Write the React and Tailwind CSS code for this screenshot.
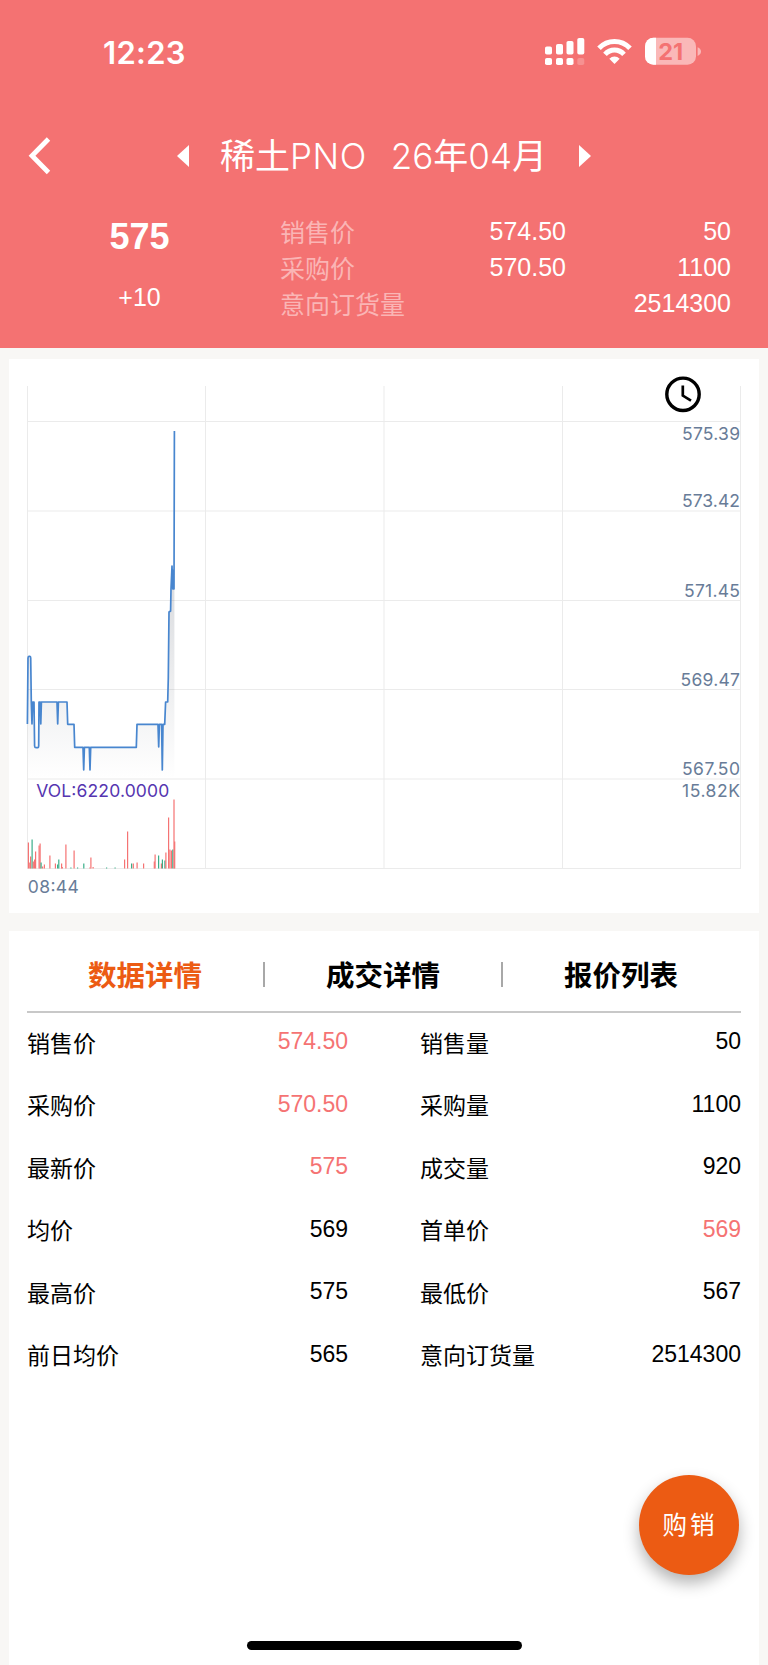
import { useState } from "react";

const quotes = [
  { label: "销售价", price: "574.50", amount: "50" },
  { label: "采购价", price: "570.50", amount: "1100" },
  { label: "意向订货量", price: "", amount: "2514300" },
];

const tabs = ["数据详情", "成交详情", "报价列表"];

const details = [
  { label: "销售价", value: "574.50", up: true },
  { label: "销售量", value: "50" },
  { label: "采购价", value: "570.50", up: true },
  { label: "采购量", value: "1100" },
  { label: "最新价", value: "575", up: true },
  { label: "成交量", value: "920" },
  { label: "均价", value: "569" },
  { label: "首单价", value: "569", up: true },
  { label: "最高价", value: "575" },
  { label: "最低价", value: "567" },
  { label: "前日均价", value: "565" },
  { label: "意向订货量", value: "2514300" },
];

// chart coordinates are relative to the top left corner of the card
const gridX = [18.5, 196.5, 375, 553.5, 731.5];
const gridY = [62.5, 152, 241.5, 330.5, 420, 509.5];

const axisLabels = [
  { text: "575.39", y: 80.5, width: 58 },
  { text: "573.42", y: 148, width: 58 },
  { text: "571.45", y: 238, width: 56 },
  { text: "569.47", y: 327.3, width: 59.5 },
  { text: "567.50", y: 416.3, width: 58 },
  { text: "15.82K", y: 438, width: 58 },
];

const linePath =
  "M18.4 365L19 299Q19.2 297.3 20 297.3H21Q21.7 297.3 21.7 299L22.3 343L23 365L23.7 343H25L25.6 387Q25.7 388.7 27 388.7H28.8Q29.6 388.7 29.7 387L30 343H31.3L31.8 365L32.4 343H48L48.7 365L49.4 343H58L58.7 365.3H65L65.7 388.4H74L74.7 411L75.4 388.4H80.3L81 411L81.7 388.4H127.3L128 365.4H149L149.7 388L150.4 365.4H152.6L153.3 411L154 365.4H155.7L156.6 343H158.7L159.3 319L160 253L161.6 252L162 230L163 207L163.8 230L164.3 211L165 230L165.4 72";

// x, height, colour of every volume bar
const bars = [
  [19.3, 26, "r"], [20.7, 6, "r"], [21.5, 12, "r"], [23, 29, "g"], [24.2, 7, "r"], [25.5, 9, "r"], [26.5, 17, "r"],
  [30, 23, "r"], [31, 25, "r"], [32, 6, "g"], [33.5, 2, "r"], [35.3, 4, "r"], [40.8, 13, "r"], [46.3, 5, "r"],
  [48.5, 4, "g"], [49.7, 9, "g"], [52.5, 5, "r"], [53.2, 1.5, "r"], [56.8, 24, "r"], [61.8, 1, "g"], [65, 18, "r"],
  [68.5, 1, "g"], [74.7, 5, "g"], [80.8, 1, "r"], [81.8, 11, "r"], [84, 1.5, "r"], [97.5, 1, "g"], [106, 1, "g"],
  [115.5, 9, "r"], [118.5, 37, "r"], [122.5, 5, "g"], [124.2, 5, "r"], [128, 6, "r"], [134.5, 5, "r"], [145.2, 7, "r"],
  [146, 14, "r"], [149.5, 13, "g"], [152.3, 5, "r"], [153.3, 9, "g"], [155.8, 8, "g"], [156.8, 16, "r"],
  [159.5, 51, "r"], [160.8, 19, "r"], [162.3, 18, "r"], [163.7, 19, "g"], [164.9, 69, "r"], [165.6, 27, "r"],
];

function StatusBar() {
  return (
    <div className="flex h-[104px] items-start justify-between pl-[103px] pr-[67px]">
      <span className="mt-[37px] font-['Inter'] text-[31px] font-semibold leading-8 tracking-[0.3px]">12:23</span>
      <svg className="mt-[37px]" width="158" height="30" viewBox="543 37 158 30">
        <g fill="#fff">
          <rect x="545" y="46.5" width="7" height="8" rx="1.8" />
          <rect x="556" y="44" width="7" height="10.5" rx="1.8" />
          <rect x="566.5" y="41" width="7" height="13.5" rx="1.8" />
          <rect x="577.3" y="38" width="7" height="16.5" rx="1.8" />
          <rect x="545" y="58" width="7" height="7" rx="1.8" />
          <rect x="556" y="58" width="7" height="7" rx="1.8" />
          <rect x="566.5" y="58" width="7" height="7" rx="1.8" />
          <rect x="577.3" y="58" width="7" height="7" rx="1.8" opacity="0.22" />
          <path d="M614.5 64L609.3 58.8Q611.6 56.4 614.5 56.4T619.7 58.8Z" />
        </g>
        <g fill="none" stroke="#fff" strokeWidth="5">
          <path d="M599 48.3Q605.6 41.6 614.5 41.6T630 48.3" />
          <path d="M605 54.4Q609 50.1 614.5 50.1T624 54.4" />
        </g>
        <clipPath id="charge">
          <rect x="645" y="37.8" width="51" height="27" rx="8.5" />
        </clipPath>
        <g clipPath="url(#charge)">
          <rect x="645" y="37" width="51" height="29" fill="#fab8b8" />
          <rect x="645" y="37" width="11" height="29" fill="#fff" />
        </g>
        <path d="M697.6 47.3Q701 48.6 701 51.6T697.6 56Z" fill="#fab8b8" />
        <text x="670.7" y="60.2" textAnchor="middle" fill="#f47272" className="font-['Inter'] text-[23.5px] font-bold">21</text>
      </svg>
    </div>
  );
}

function PriceChart() {
  return (
    <svg width="750" height="554" viewBox="0 0 750 554" className="block">
      <defs>
        <linearGradient id="area" x1="0" y1="72" x2="0" y2="420" gradientUnits="userSpaceOnUse">
          <stop offset="0" stopColor="#5b6270" stopOpacity="0.35" />
          <stop offset="0.5" stopColor="#5b6270" stopOpacity="0.2" />
          <stop offset="1" stopColor="#5b6270" stopOpacity="0" />
        </linearGradient>
      </defs>
      <g stroke="#ebebeb" strokeWidth="1">
        {gridX.map((x) => (
          <line key={x} x1={x} x2={x} y1="27" y2="510" />
        ))}
        {gridY.map((y) => (
          <line key={y} x1="18" x2="732" y1={y} y2={y} />
        ))}
      </g>
      <path d={linePath + "V420H18.4Z"} fill="url(#area)" />
      <path d={linePath} fill="none" stroke="#4886cf" strokeWidth="1.7" strokeLinejoin="round" />
      {bars.map(([x, height, color]) => (
        <rect key={x} x={x - 0.5} y={509.5 - height} width="1.2" height={height} fill={color === "r" ? "#f57373" : "#3aae89"} />
      ))}
      <g fill="#687c98" className="font-['Inter'] text-[17.5px]">
        {axisLabels.map(({ text, y, width }) => (
          <text key={text} x="731" y={y} textAnchor="end" textLength={width}>{text}</text>
        ))}
        <text x="18.8" y="534" textLength="51">08:44</text>
        <text x="27.2" y="438" textLength="133" fill="#5535b0">VOL:6220.0000</text>
      </g>
      <g fill="none" stroke="#000">
        <circle cx="674" cy="35.3" r="16.2" strokeWidth="3.4" />
        <path d="M673.8 26.5V36.6L682 41.6" strokeWidth="2.7" />
      </g>
    </svg>
  );
}

export default function App() {
  const [activeTab, setActiveTab] = useState(0);

  return (
    <div className="relative flex h-[1665px] w-[768px] flex-col overflow-hidden bg-[#f8f7f5] font-['Liberation_Sans','Noto_Sans_CJK_SC',sans-serif] text-black">
      <header className="h-[348px] bg-[#f47272] text-white">
        <StatusBar />
        <div className="flex h-[104px] items-center">
          <svg className="ml-[28px]" width="24" height="38" viewBox="0 0 24 38">
            <path d="M20.5 2L4 18.7L20.5 35.5" fill="none" stroke="#fff" strokeWidth="4.8" />
          </svg>
          <svg className="ml-[125px]" width="12" height="22" viewBox="0 0 12 22">
            <path d="M12 0V22L0 11Z" fill="#fff" />
          </svg>
          <h1 className="ml-[31px] flex w-[327px] justify-between whitespace-nowrap pb-px font-['Inter','Noto_Sans_CJK_SC',sans-serif] text-[35px] leading-[48px]">
            <span>
              稀土<span className="font-light tracking-[0.6px]">PNO</span>
            </span>
            <span>
              <span className="font-light">26</span>年<span className="font-light">04</span>月
            </span>
          </h1>
          <svg className="ml-[32px]" width="12" height="22" viewBox="0 0 12 22">
            <path d="M0 0V22L12 11Z" fill="#fff" />
          </svg>
        </div>
        <div className="flex">
          <div className="flex w-[279px] flex-col items-center">
            <strong className="mt-[9px] text-[36px] leading-[40px]">575</strong>
            <span className="mt-[25px] text-[25px] leading-[30px]">+10</span>
          </div>
          <div className="ml-px mt-[5px] flex w-[451px] flex-col">
            {quotes.map((quote) => (
              <div key={quote.label} className="flex h-[35.8px] items-center text-[25px] leading-[36px]">
                <span className="w-[140px] whitespace-nowrap pt-[4px] text-[#fab5b5]">{quote.label}</span>
                <span className="w-[146px] text-right">{quote.price}</span>
                <span className="flex-1 text-right">{quote.amount}</span>
              </div>
            ))}
          </div>
        </div>
      </header>

      <section className="mx-[9px] mt-[11px] h-[554px] shrink-0 bg-white">
        <PriceChart />
      </section>

      <section className="mx-[9px] mt-[18px] flex-1 bg-white px-[18px]">
        <nav className="flex h-[82px] items-center border-b-2 border-[#c8c8c8] pt-[6px]">
          {tabs.map((tab, index) => (
            <div key={tab} className="relative flex flex-1 justify-center">
              <button
                onClick={() => setActiveTab(index)}
                className={
                  index === activeTab
                    ? "pr-[2px] pt-[3px] text-[28.5px] font-bold leading-[30px] text-[#ec5b13]"
                    : "pr-[2px] pt-[3px] text-[28.5px] font-bold leading-[30px] text-black"
                }
              >
                {tab}
              </button>
              {index > 0 && <i className="absolute left-[-2px] top-[4px] h-[25px] w-[1.5px] bg-[#a8a8a8]" />}
            </div>
          ))}
        </nav>
        <div className="grid grid-cols-[321px_321px] gap-x-[72px]">
          {details.map((item, index) => (
            <div key={index} className="flex h-[62.5px] items-center justify-between text-[23px]">
              <span className="pb-px">{item.label}</span>
              <span className={item.up ? "pb-[6px] text-[#f57373]" : "pb-[6px] text-black"}>{item.value}</span>
            </div>
          ))}
        </div>
      </section>

      <button className="absolute left-[639px] top-[1475px] h-[100px] w-[100px] rounded-full bg-[#ec5b13] pl-[2px] pt-[3px] text-[24.5px] tracking-[3px] text-white shadow-[0_8px_16px_rgba(0,0,0,0.3)]">
        购销
      </button>
      <div className="absolute left-[247px] top-[1641px] h-[9px] w-[275px] rounded-full bg-black" />
    </div>
  );
}
